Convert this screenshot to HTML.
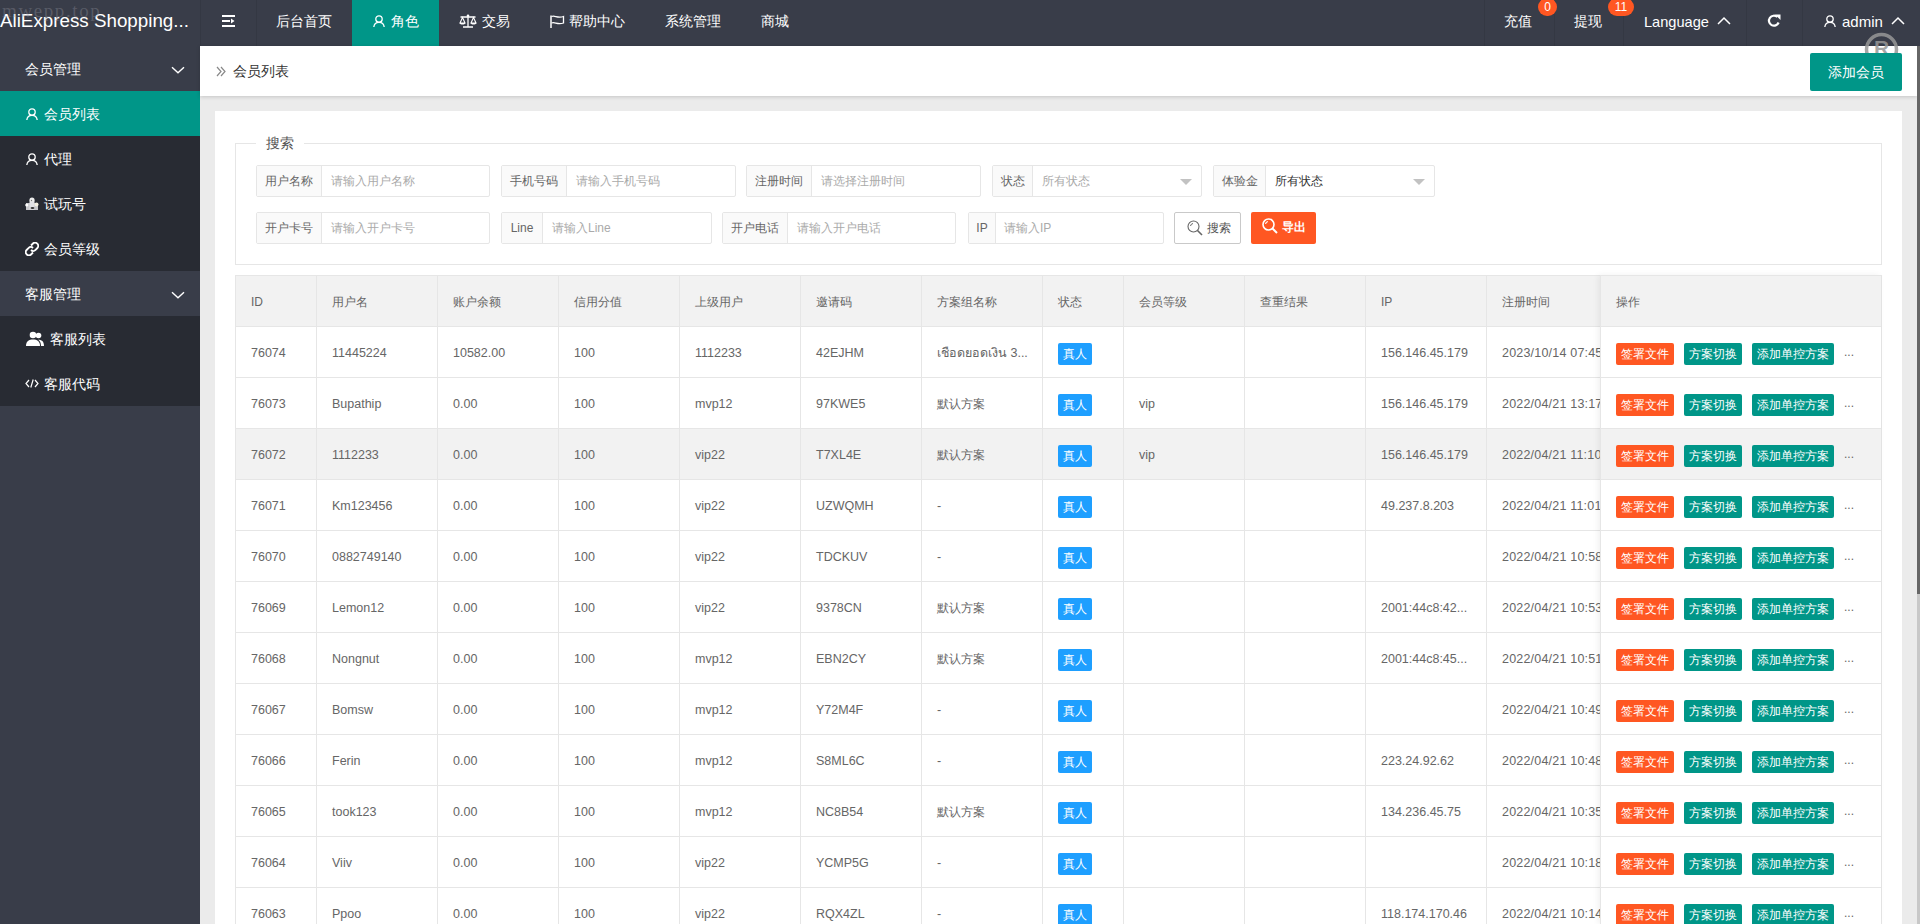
<!DOCTYPE html>
<html><head><meta charset="utf-8">
<style>
*{box-sizing:border-box;margin:0;padding:0}
html,body{width:1920px;height:924px;overflow:hidden;background:#ebebeb;font-family:"Liberation Sans",sans-serif;color:#666}
.abs{position:absolute}
#hdr{position:absolute;left:0;top:0;width:1920px;height:46px;background:#393D49;color:#fff;font-size:14px;font-weight:500}
#hdr .t{position:absolute;top:0;line-height:42px;white-space:nowrap}
#hdr .sep{position:absolute;top:0;width:1px;height:46px;background:#343843}
#logo{position:absolute;left:0;top:0;line-height:42px;font-size:18.8px;color:#fff;white-space:nowrap;font-weight:400}
#wm{position:absolute;left:2px;top:1px;font-family:"Liberation Serif",serif;font-size:19px;letter-spacing:1.6px;color:rgba(150,150,160,.35);white-space:nowrap;line-height:20px}
.badge2{position:absolute;top:-2px;height:18px;line-height:19px;border-radius:9px;background:#FF5722;color:#fff;font-size:12px;text-align:center;font-weight:400}
#side{position:absolute;left:0;top:46px;width:200px;height:878px;background:#393D49;color:#fff;font-size:14px;font-weight:500}
#side .it{position:absolute;left:0;width:200px;height:45px}
#side .it span{position:absolute;top:0;line-height:46px;white-space:nowrap}
#side svg{position:absolute}
.dark{background:#282B33}
.act{background:#009688}
#crumb{position:absolute;left:200px;top:46px;width:1717px;height:50px;background:#fff;box-shadow:0 1px 4px rgba(0,0,0,.16)}
#crumb .c{position:absolute;left:33px;top:0;line-height:50px;font-size:14px;color:#333;font-weight:400}
#addbtn{position:absolute;left:1610px;top:7px;width:92px;height:38px;background:#009688;border-radius:2px;color:#fff;font-size:14px;line-height:38px;text-align:center;font-weight:500}
#sb{position:absolute;left:1917px;top:46px;width:3px;height:878px;background:#c8c8c8}
#sbt{position:absolute;left:1917px;top:46px;width:3px;height:548px;background:#666}
#card{position:absolute;left:215px;top:111px;width:1687px;height:813px;background:#fff}
#fs{position:absolute;left:235px;top:143px;width:1647px;height:122px;border:1px solid #e6e6e6}
#legend{position:absolute;left:256px;top:135px;width:48px;height:16px;background:#fff;font-size:14px;line-height:16px;text-align:center;color:#555}
.ig{position:absolute;height:32px;border:1px solid #e6e6e6;border-radius:2px;background:#fff;font-size:12px}
.ig .lb{position:absolute;left:0;top:0;height:30px;line-height:30px;background:#fafafa;border-right:1px solid #e6e6e6;color:#666;text-align:center;white-space:nowrap}
.ig .ph{position:absolute;top:0;line-height:30px;color:#aaa;white-space:nowrap}
.ig .sel{color:#333}
.ig .arr{position:absolute;top:13px;width:0;height:0;border-left:6px solid transparent;border-right:6px solid transparent;border-top:6px solid #c2c2c2}
#sbtn{position:absolute;left:1174px;top:212px;width:67px;height:32px;border:1px solid #c9c9c9;border-radius:2px;background:#fff;font-size:12px;color:#555}
#ebtn{position:absolute;left:1251px;top:212px;width:65px;height:32px;border-radius:2px;background:#FF5722;font-size:12px;color:#fff;font-weight:700}
#tbl{position:absolute;background:#fff}
.hl{position:absolute;left:235px;width:1647px;height:1px;background:#e6e6e6}
.vl{position:absolute;top:275px;width:1px;height:649px;background:#e6e6e6}
.th{position:absolute;padding-top:1px;line-height:50px;font-size:12px;color:#666;white-space:nowrap}
.td{position:absolute;padding-top:1px;line-height:50px;font-size:12.5px;color:#666;white-space:nowrap}
.clip{overflow:hidden}
.badge{position:absolute;width:34px;height:22px;line-height:22px;background:#1E9FFF;color:#fff;font-size:12px;text-align:center;border-radius:2px;font-weight:500}
.btn{position:absolute;height:22px;line-height:22px;color:#fff;font-size:12px;text-align:center;border-radius:2px;font-weight:500}
.btn.o{background:#FF5722}
.btn.g{background:#009688}
.dots{position:absolute;line-height:50px;font-size:12px;color:#666}
#fixr{position:absolute;left:1600px;top:275px;width:281px;height:649px;box-shadow:-2px 0 6px rgba(0,0,0,.06)}

.cj{font-size:12px}
#reg{position:absolute;left:1865px;top:33px;width:33px;height:30px}

</style></head><body>
<div id="hdr">
  <div id="logo">AliExpress Shopping...</div>
  <div id="wm">mwepp.top</div>
  <div class="sep" style="left:200px"></div>
  <div class="sep" style="left:256px"></div>
  <svg class="abs" style="left:222px;top:15px" width="13" height="12" viewBox="0 0 13 12"><rect x="0" y="0" width="13" height="2" fill="#fff"/><rect x="0" y="5" width="8" height="2" fill="#fff"/><rect x="0" y="10" width="13" height="2" fill="#fff"/><path d="M9 3.5 L12.5 6 L9 8.5Z" fill="#fff"/></svg>
  <div class="t" style="left:276px">后台首页</div>
  <div class="abs" style="left:352px;top:0;width:87px;height:46px;background:#009688"></div>
  <svg class="abs" style="left:373px;top:15px" width="12" height="12" viewBox="0 0 12 12"><circle cx="6" cy="4" r="3.2" fill="none" stroke="#fff" stroke-width="1.3"/><path d="M0.8 12 C1.2 8.5 3.5 7.4 6 7.4 C8.5 7.4 10.8 8.5 11.2 12" fill="none" stroke="#fff" stroke-width="1.3"/></svg>
  <div class="t" style="left:391px">角色</div>
  <svg class="abs" style="left:459px;top:14px" width="18" height="14" viewBox="0 0 18 14"><path d="M9 1 V13 M4 13 H14 M1.5 3 H16.5" stroke="#fff" stroke-width="1.3" fill="none"/><circle cx="9" cy="1.8" r="1.3" fill="#fff"/><path d="M1 9 L3.5 3.5 L6 9 Z M12 9 L14.5 3.5 L17 9 Z" stroke="#fff" stroke-width="1.1" fill="none"/><path d="M0.8 9 H6.2 C6 11 1 11 0.8 9Z M11.8 9 H17.2 C17 11 12 11 11.8 9Z" fill="#fff"/></svg>
  <div class="t" style="left:482px">交易</div>
  <svg class="abs" style="left:550px;top:15px" width="15" height="13" viewBox="0 0 15 13"><path d="M1 0.5 V13" stroke="#fff" stroke-width="1.5"/><path d="M1.5 1.5 C5 0 7 3.5 13.5 1.5 V8 C7 10 5 6.5 1.5 8" stroke="#fff" stroke-width="1.3" fill="none"/></svg>
  <div class="t" style="left:569px">帮助中心</div>
  <div class="t" style="left:665px">系统管理</div>
  <div class="t" style="left:761px">商城</div>
  <div class="sep" style="left:1484px"></div>
  <div class="sep" style="left:1554px"></div>
  <div class="sep" style="left:1623px"></div>
  <div class="sep" style="left:1746px"></div>
  <div class="sep" style="left:1802px"></div>
  <div class="t" style="left:1504px">充值</div>
  <div class="badge2" style="left:1538px;width:19px">0</div>
  <div class="t" style="left:1574px">提现</div>
  <div class="badge2" style="left:1608px;width:26px">11</div>
  <div class="t" style="left:1644px;top:1px;font-size:14.6px;font-weight:400">Language</div>
  <svg class="abs" style="left:1717px;top:16px" width="14" height="9" viewBox="0 0 14 9"><path d="M1 8 L7 2 L13 8" stroke="#fff" stroke-width="1.5" fill="none"/></svg>
  <svg class="abs" style="left:1767px;top:14px" width="14" height="14" viewBox="0 0 14 14"><path d="M11.6 8.5 A5 5 0 1 1 10.3 3" stroke="#fff" stroke-width="2.2" fill="none"/><path d="M8 0.5 L13.5 0.5 L13.5 6 Z" fill="#fff"/></svg>
  <svg class="abs" style="left:1824px;top:15px" width="12" height="12" viewBox="0 0 12 12"><circle cx="6" cy="4" r="3.2" fill="none" stroke="#fff" stroke-width="1.3"/><path d="M0.8 12 C1.2 8.5 3.5 7.4 6 7.4 C8.5 7.4 10.8 8.5 11.2 12" fill="none" stroke="#fff" stroke-width="1.3"/></svg>
  <div class="t" style="left:1842px;top:1px;font-size:15px;font-weight:400">admin</div>
  <svg class="abs" style="left:1891px;top:16px" width="14" height="9" viewBox="0 0 14 9"><path d="M1 8 L7 2 L13 8" stroke="#fff" stroke-width="1.5" fill="none"/></svg>
</div>
<div id="side">
  <div class="it" style="top:0"><span style="left:25px">会员管理</span>
    <svg style="left:171px;top:20px" width="14" height="8" viewBox="0 0 14 8"><path d="M1 1.2 L7 6.8 L13 1.2" stroke="#fff" stroke-width="1.4" fill="none"/></svg></div>
  <div class="it act" style="top:45px"><span style="left:44px">会员列表</span>
    <svg style="left:26px;top:17px" width="12" height="12" viewBox="0 0 12 12"><circle cx="6" cy="4" r="3.2" fill="none" stroke="#fff" stroke-width="1.3"/><path d="M0.8 12 C1.2 8.5 3.5 7.4 6 7.4 C8.5 7.4 10.8 8.5 11.2 12" fill="none" stroke="#fff" stroke-width="1.3"/></svg></div>
  <div class="it dark" style="top:90px"><span style="left:44px">代理</span>
    <svg style="left:26px;top:17px" width="12" height="12" viewBox="0 0 12 12"><circle cx="6" cy="4" r="3.2" fill="none" stroke="#fff" stroke-width="1.3"/><path d="M0.8 12 C1.2 8.5 3.5 7.4 6 7.4 C8.5 7.4 10.8 8.5 11.2 12" fill="none" stroke="#fff" stroke-width="1.3"/></svg></div>
  <div class="it dark" style="top:135px"><span style="left:44px">试玩号</span>
    <svg style="left:25px;top:16px" width="14" height="14" viewBox="0 0 14 14"><rect x="1" y="6" width="12" height="7" fill="#c8c8cc"/><circle cx="7" cy="3.2" r="2.6" fill="#eee"/><rect x="4.5" y="4.5" width="5" height="8" fill="#e2e2e6"/><circle cx="1.8" cy="8" r="1.6" fill="#fff"/><circle cx="11.5" cy="7.5" r="2" fill="#f3efe2"/><ellipse cx="7.5" cy="11" rx="2" ry="1" fill="#333"/><circle cx="6.5" cy="3.5" r="0.7" fill="#777"/></svg></div>
  <div class="it dark" style="top:180px"><span style="left:44px">会员等级</span>
    <svg style="left:25px;top:16px" width="14" height="14" viewBox="0 0 14 14"><path d="M6 3.5 L8 1.5 C9.2 0.3 11 0.3 12.3 1.7 C13.6 3 13.6 4.8 12.4 6 L10.3 8.1 C9.1 9.3 7.3 9.3 6 8" stroke="#fff" stroke-width="1.8" fill="none"/><path d="M8 10.5 L6 12.5 C4.8 13.7 3 13.7 1.7 12.3 C0.4 11 0.4 9.2 1.6 8 L3.7 5.9 C4.9 4.7 6.7 4.7 8 6" stroke="#fff" stroke-width="1.8" fill="none"/></svg></div>
  <div class="it" style="top:225px"><span style="left:25px">客服管理</span>
    <svg style="left:171px;top:20px" width="14" height="8" viewBox="0 0 14 8"><path d="M1 1.2 L7 6.8 L13 1.2" stroke="#fff" stroke-width="1.4" fill="none"/></svg></div>
  <div class="it dark" style="top:270px"><span style="left:50px">客服列表</span>
    <svg style="left:26px;top:15px" width="18" height="15" viewBox="0 0 18 15"><circle cx="7" cy="4" r="3.3" fill="#fff"/><path d="M0 15 C0 10 3 8.5 7 8.5 C11 8.5 14 10 14 15Z" fill="#fff"/><circle cx="12.5" cy="4.5" r="2.8" fill="#fff"/><path d="M12 8.7 C15.5 8.7 18 10 18 15 H15 C15 11 13.5 9.5 12 8.7Z" fill="#fff"/></svg></div>
  <div class="it dark" style="top:315px"><span style="left:44px">客服代码</span>
    <svg style="left:25px;top:18px" width="14" height="9" viewBox="0 0 14 9"><path d="M4 1 L1 4.5 L4 8 M10 1 L13 4.5 L10 8 M8.2 0.5 L5.8 8.5" stroke="#fff" stroke-width="1.2" fill="none"/></svg></div>
</div>
<div id="crumb">
  <svg class="abs" style="left:16px;top:20px" width="10" height="11" viewBox="0 0 10 11"><path d="M1 1 L5 5.5 L1 10 M5 1 L9 5.5 L5 10" stroke="#888" stroke-width="1.2" fill="none"/></svg>
  <div class="c">会员列表</div>
  <svg class="abs" style="left:1664px;top:-14px" width="36" height="36" viewBox="0 0 36 36"><circle cx="17.5" cy="17.5" r="15" stroke="rgba(150,150,150,.85)" stroke-width="3.5" fill="none"/><text x="17.5" y="23" text-anchor="middle" font-family="Liberation Sans" font-weight="700" font-size="21" fill="rgba(150,150,150,.85)">R</text></svg>
  <div id="addbtn">添加会员</div>
</div>
<div id="sb"></div><div id="sbt"></div>
<div id="card"></div>
<div id="fs"></div>
<div id="legend">搜索</div>
<!-- row 1 -->
<div class="ig" style="left:256px;top:165px;width:234px"><div class="lb" style="width:65px">用户名称</div><div class="ph" style="left:74px">请输入用户名称</div></div>
<div class="ig" style="left:501px;top:165px;width:235px"><div class="lb" style="width:65px">手机号码</div><div class="ph" style="left:74px">请输入手机号码</div></div>
<div class="ig" style="left:746px;top:165px;width:235px"><div class="lb" style="width:65px">注册时间</div><div class="ph" style="left:74px">请选择注册时间</div></div>
<div class="ig" style="left:992px;top:165px;width:210px"><div class="lb" style="width:40px">状态</div><div class="ph" style="left:49px">所有状态</div><div class="arr" style="left:187px"></div></div>
<div class="ig" style="left:1213px;top:165px;width:222px"><div class="lb" style="width:52px">体验金</div><div class="ph sel" style="left:61px">所有状态</div><div class="arr" style="left:199px"></div></div>
<!-- row 2 -->
<div class="ig" style="left:256px;top:212px;width:234px"><div class="lb" style="width:65px">开户卡号</div><div class="ph" style="left:74px">请输入开户卡号</div></div>
<div class="ig" style="left:501px;top:212px;width:211px"><div class="lb" style="width:41px">Line</div><div class="ph" style="left:50px">请输入Line</div></div>
<div class="ig" style="left:722px;top:212px;width:234px"><div class="lb" style="width:65px">开户电话</div><div class="ph" style="left:74px">请输入开户电话</div></div>
<div class="ig" style="left:968px;top:212px;width:196px"><div class="lb" style="width:27px">IP</div><div class="ph" style="left:35px">请输入IP</div></div>
<div id="sbtn"><svg class="abs" style="left:12px;top:7px" width="16" height="16" viewBox="0 0 16 16"><circle cx="6.5" cy="6.5" r="5.5" stroke="#666" stroke-width="1.1" fill="none"/><path d="M10.5 10.5 L15 15" stroke="#666" stroke-width="1.6"/><path d="M3.5 6 A3 3 0 0 1 6 3.5" stroke="#666" stroke-width="1" fill="none"/></svg><span class="abs" style="left:32px;top:0;line-height:30px">搜索</span></div>
<div id="ebtn"><svg class="abs" style="left:11px;top:6px" width="16" height="16" viewBox="0 0 16 16"><circle cx="6.5" cy="6.5" r="5.5" stroke="#fff" stroke-width="1.6" fill="none"/><path d="M10.5 10.5 L15 15" stroke="#fff" stroke-width="2"/><path d="M3.5 6 A3 3 0 0 1 6 3.5" stroke="#fff" stroke-width="1.2" fill="none"/></svg><span class="abs" style="left:31px;top:0;line-height:30px">导出</span></div>
<div id="tbl" style="left:235px;top:275px;width:1647px;height:649px"></div>
<div class="abs" style="left:236px;top:276px;width:1645px;height:50px;background:#f2f2f2"></div>
<div class="abs" style="left:236px;top:429px;width:1645px;height:50px;background:#f2f2f2"></div>
<div class="hl" style="top:275px"></div>
<div class="hl" style="top:326px"></div>
<div class="hl" style="top:377px"></div>
<div class="hl" style="top:428px"></div>
<div class="hl" style="top:479px"></div>
<div class="hl" style="top:530px"></div>
<div class="hl" style="top:581px"></div>
<div class="hl" style="top:632px"></div>
<div class="hl" style="top:683px"></div>
<div class="hl" style="top:734px"></div>
<div class="hl" style="top:785px"></div>
<div class="hl" style="top:836px"></div>
<div class="hl" style="top:887px"></div>
<div class="vl" style="left:316px"></div>
<div class="vl" style="left:437px"></div>
<div class="vl" style="left:558px"></div>
<div class="vl" style="left:679px"></div>
<div class="vl" style="left:800px"></div>
<div class="vl" style="left:921px"></div>
<div class="vl" style="left:1042px"></div>
<div class="vl" style="left:1123px"></div>
<div class="vl" style="left:1244px"></div>
<div class="vl" style="left:1365px"></div>
<div class="vl" style="left:1486px"></div>
<div class="vl" style="left:1600px"></div>
<div class="vl" style="left:235px"></div><div class="vl" style="left:1881px"></div>
<div class="th" style="left:251px;top:276px">ID</div>
<div class="th" style="left:332px;top:276px">用户名</div>
<div class="th" style="left:453px;top:276px">账户余额</div>
<div class="th" style="left:574px;top:276px">信用分值</div>
<div class="th" style="left:695px;top:276px">上级用户</div>
<div class="th" style="left:816px;top:276px">邀请码</div>
<div class="th" style="left:937px;top:276px">方案组名称</div>
<div class="th" style="left:1058px;top:276px">状态</div>
<div class="th" style="left:1139px;top:276px">会员等级</div>
<div class="th" style="left:1260px;top:276px">查重结果</div>
<div class="th" style="left:1381px;top:276px">IP</div>
<div class="th" style="left:1502px;top:276px">注册时间</div>
<div class="th" style="left:1616px;top:276px">操作</div>
<div class="td" style="left:251px;top:327px">76074</div>
<div class="td" style="left:332px;top:327px">11445224</div>
<div class="td" style="left:453px;top:327px">10582.00</div>
<div class="td" style="left:574px;top:327px">100</div>
<div class="td" style="left:695px;top:327px">1112233</div>
<div class="td" style="left:816px;top:327px">42EJHM</div>
<div class="td" style="left:937px;top:327px">เชือดยอดเงิน 3...</div>
<div class="badge" style="left:1058px;top:343px">真人</div>
<div class="td" style="left:1381px;top:327px">156.146.45.179</div>
<div class="td clip" style="left:1502px;top:327px;width:98px;letter-spacing:0.2px">2023/10/14 07:45</div>
<div class="btn o" style="left:1616px;top:343px;width:58px">签署文件</div>
<div class="btn g" style="left:1684px;top:343px;width:58px">方案切换</div>
<div class="btn g" style="left:1752px;top:343px;width:82px">添加单控方案</div>
<div class="dots" style="left:1844px;top:327px">...</div>
<div class="td" style="left:251px;top:378px">76073</div>
<div class="td" style="left:332px;top:378px">Bupathip</div>
<div class="td" style="left:453px;top:378px">0.00</div>
<div class="td" style="left:574px;top:378px">100</div>
<div class="td" style="left:695px;top:378px">mvp12</div>
<div class="td" style="left:816px;top:378px">97KWE5</div>
<div class="td cj" style="left:937px;top:378px">默认方案</div>
<div class="badge" style="left:1058px;top:394px">真人</div>
<div class="td" style="left:1139px;top:378px">vip</div>
<div class="td" style="left:1381px;top:378px">156.146.45.179</div>
<div class="td clip" style="left:1502px;top:378px;width:98px;letter-spacing:0.2px">2022/04/21 13:17</div>
<div class="btn o" style="left:1616px;top:394px;width:58px">签署文件</div>
<div class="btn g" style="left:1684px;top:394px;width:58px">方案切换</div>
<div class="btn g" style="left:1752px;top:394px;width:82px">添加单控方案</div>
<div class="dots" style="left:1844px;top:378px">...</div>
<div class="td" style="left:251px;top:429px">76072</div>
<div class="td" style="left:332px;top:429px">1112233</div>
<div class="td" style="left:453px;top:429px">0.00</div>
<div class="td" style="left:574px;top:429px">100</div>
<div class="td" style="left:695px;top:429px">vip22</div>
<div class="td" style="left:816px;top:429px">T7XL4E</div>
<div class="td cj" style="left:937px;top:429px">默认方案</div>
<div class="badge" style="left:1058px;top:445px">真人</div>
<div class="td" style="left:1139px;top:429px">vip</div>
<div class="td" style="left:1381px;top:429px">156.146.45.179</div>
<div class="td clip" style="left:1502px;top:429px;width:98px;letter-spacing:0.2px">2022/04/21 11:10</div>
<div class="btn o" style="left:1616px;top:445px;width:58px">签署文件</div>
<div class="btn g" style="left:1684px;top:445px;width:58px">方案切换</div>
<div class="btn g" style="left:1752px;top:445px;width:82px">添加单控方案</div>
<div class="dots" style="left:1844px;top:429px">...</div>
<div class="td" style="left:251px;top:480px">76071</div>
<div class="td" style="left:332px;top:480px">Km123456</div>
<div class="td" style="left:453px;top:480px">0.00</div>
<div class="td" style="left:574px;top:480px">100</div>
<div class="td" style="left:695px;top:480px">vip22</div>
<div class="td" style="left:816px;top:480px">UZWQMH</div>
<div class="td" style="left:937px;top:480px">-</div>
<div class="badge" style="left:1058px;top:496px">真人</div>
<div class="td" style="left:1381px;top:480px">49.237.8.203</div>
<div class="td clip" style="left:1502px;top:480px;width:98px;letter-spacing:0.2px">2022/04/21 11:01</div>
<div class="btn o" style="left:1616px;top:496px;width:58px">签署文件</div>
<div class="btn g" style="left:1684px;top:496px;width:58px">方案切换</div>
<div class="btn g" style="left:1752px;top:496px;width:82px">添加单控方案</div>
<div class="dots" style="left:1844px;top:480px">...</div>
<div class="td" style="left:251px;top:531px">76070</div>
<div class="td" style="left:332px;top:531px">0882749140</div>
<div class="td" style="left:453px;top:531px">0.00</div>
<div class="td" style="left:574px;top:531px">100</div>
<div class="td" style="left:695px;top:531px">vip22</div>
<div class="td" style="left:816px;top:531px">TDCKUV</div>
<div class="td" style="left:937px;top:531px">-</div>
<div class="badge" style="left:1058px;top:547px">真人</div>
<div class="td clip" style="left:1502px;top:531px;width:98px;letter-spacing:0.2px">2022/04/21 10:58</div>
<div class="btn o" style="left:1616px;top:547px;width:58px">签署文件</div>
<div class="btn g" style="left:1684px;top:547px;width:58px">方案切换</div>
<div class="btn g" style="left:1752px;top:547px;width:82px">添加单控方案</div>
<div class="dots" style="left:1844px;top:531px">...</div>
<div class="td" style="left:251px;top:582px">76069</div>
<div class="td" style="left:332px;top:582px">Lemon12</div>
<div class="td" style="left:453px;top:582px">0.00</div>
<div class="td" style="left:574px;top:582px">100</div>
<div class="td" style="left:695px;top:582px">vip22</div>
<div class="td" style="left:816px;top:582px">9378CN</div>
<div class="td cj" style="left:937px;top:582px">默认方案</div>
<div class="badge" style="left:1058px;top:598px">真人</div>
<div class="td" style="left:1381px;top:582px">2001:44c8:42...</div>
<div class="td clip" style="left:1502px;top:582px;width:98px;letter-spacing:0.2px">2022/04/21 10:53</div>
<div class="btn o" style="left:1616px;top:598px;width:58px">签署文件</div>
<div class="btn g" style="left:1684px;top:598px;width:58px">方案切换</div>
<div class="btn g" style="left:1752px;top:598px;width:82px">添加单控方案</div>
<div class="dots" style="left:1844px;top:582px">...</div>
<div class="td" style="left:251px;top:633px">76068</div>
<div class="td" style="left:332px;top:633px">Nongnut</div>
<div class="td" style="left:453px;top:633px">0.00</div>
<div class="td" style="left:574px;top:633px">100</div>
<div class="td" style="left:695px;top:633px">mvp12</div>
<div class="td" style="left:816px;top:633px">EBN2CY</div>
<div class="td cj" style="left:937px;top:633px">默认方案</div>
<div class="badge" style="left:1058px;top:649px">真人</div>
<div class="td" style="left:1381px;top:633px">2001:44c8:45...</div>
<div class="td clip" style="left:1502px;top:633px;width:98px;letter-spacing:0.2px">2022/04/21 10:51</div>
<div class="btn o" style="left:1616px;top:649px;width:58px">签署文件</div>
<div class="btn g" style="left:1684px;top:649px;width:58px">方案切换</div>
<div class="btn g" style="left:1752px;top:649px;width:82px">添加单控方案</div>
<div class="dots" style="left:1844px;top:633px">...</div>
<div class="td" style="left:251px;top:684px">76067</div>
<div class="td" style="left:332px;top:684px">Bomsw</div>
<div class="td" style="left:453px;top:684px">0.00</div>
<div class="td" style="left:574px;top:684px">100</div>
<div class="td" style="left:695px;top:684px">mvp12</div>
<div class="td" style="left:816px;top:684px">Y72M4F</div>
<div class="td" style="left:937px;top:684px">-</div>
<div class="badge" style="left:1058px;top:700px">真人</div>
<div class="td clip" style="left:1502px;top:684px;width:98px;letter-spacing:0.2px">2022/04/21 10:49</div>
<div class="btn o" style="left:1616px;top:700px;width:58px">签署文件</div>
<div class="btn g" style="left:1684px;top:700px;width:58px">方案切换</div>
<div class="btn g" style="left:1752px;top:700px;width:82px">添加单控方案</div>
<div class="dots" style="left:1844px;top:684px">...</div>
<div class="td" style="left:251px;top:735px">76066</div>
<div class="td" style="left:332px;top:735px">Ferin</div>
<div class="td" style="left:453px;top:735px">0.00</div>
<div class="td" style="left:574px;top:735px">100</div>
<div class="td" style="left:695px;top:735px">mvp12</div>
<div class="td" style="left:816px;top:735px">S8ML6C</div>
<div class="td" style="left:937px;top:735px">-</div>
<div class="badge" style="left:1058px;top:751px">真人</div>
<div class="td" style="left:1381px;top:735px">223.24.92.62</div>
<div class="td clip" style="left:1502px;top:735px;width:98px;letter-spacing:0.2px">2022/04/21 10:48</div>
<div class="btn o" style="left:1616px;top:751px;width:58px">签署文件</div>
<div class="btn g" style="left:1684px;top:751px;width:58px">方案切换</div>
<div class="btn g" style="left:1752px;top:751px;width:82px">添加单控方案</div>
<div class="dots" style="left:1844px;top:735px">...</div>
<div class="td" style="left:251px;top:786px">76065</div>
<div class="td" style="left:332px;top:786px">took123</div>
<div class="td" style="left:453px;top:786px">0.00</div>
<div class="td" style="left:574px;top:786px">100</div>
<div class="td" style="left:695px;top:786px">mvp12</div>
<div class="td" style="left:816px;top:786px">NC8B54</div>
<div class="td cj" style="left:937px;top:786px">默认方案</div>
<div class="badge" style="left:1058px;top:802px">真人</div>
<div class="td" style="left:1381px;top:786px">134.236.45.75</div>
<div class="td clip" style="left:1502px;top:786px;width:98px;letter-spacing:0.2px">2022/04/21 10:35</div>
<div class="btn o" style="left:1616px;top:802px;width:58px">签署文件</div>
<div class="btn g" style="left:1684px;top:802px;width:58px">方案切换</div>
<div class="btn g" style="left:1752px;top:802px;width:82px">添加单控方案</div>
<div class="dots" style="left:1844px;top:786px">...</div>
<div class="td" style="left:251px;top:837px">76064</div>
<div class="td" style="left:332px;top:837px">Viiv</div>
<div class="td" style="left:453px;top:837px">0.00</div>
<div class="td" style="left:574px;top:837px">100</div>
<div class="td" style="left:695px;top:837px">vip22</div>
<div class="td" style="left:816px;top:837px">YCMP5G</div>
<div class="td" style="left:937px;top:837px">-</div>
<div class="badge" style="left:1058px;top:853px">真人</div>
<div class="td clip" style="left:1502px;top:837px;width:98px;letter-spacing:0.2px">2022/04/21 10:18</div>
<div class="btn o" style="left:1616px;top:853px;width:58px">签署文件</div>
<div class="btn g" style="left:1684px;top:853px;width:58px">方案切换</div>
<div class="btn g" style="left:1752px;top:853px;width:82px">添加单控方案</div>
<div class="dots" style="left:1844px;top:837px">...</div>
<div class="td" style="left:251px;top:888px">76063</div>
<div class="td" style="left:332px;top:888px">Ppoo</div>
<div class="td" style="left:453px;top:888px">0.00</div>
<div class="td" style="left:574px;top:888px">100</div>
<div class="td" style="left:695px;top:888px">vip22</div>
<div class="td" style="left:816px;top:888px">RQX4ZL</div>
<div class="td" style="left:937px;top:888px">-</div>
<div class="badge" style="left:1058px;top:904px">真人</div>
<div class="td" style="left:1381px;top:888px">118.174.170.46</div>
<div class="td clip" style="left:1502px;top:888px;width:98px;letter-spacing:0.2px">2022/04/21 10:14</div>
<div class="btn o" style="left:1616px;top:904px;width:58px">签署文件</div>
<div class="btn g" style="left:1684px;top:904px;width:58px">方案切换</div>
<div class="btn g" style="left:1752px;top:904px;width:82px">添加单控方案</div>
<div class="dots" style="left:1844px;top:888px">...</div>
<div id="fixr"></div>

</body></html>
